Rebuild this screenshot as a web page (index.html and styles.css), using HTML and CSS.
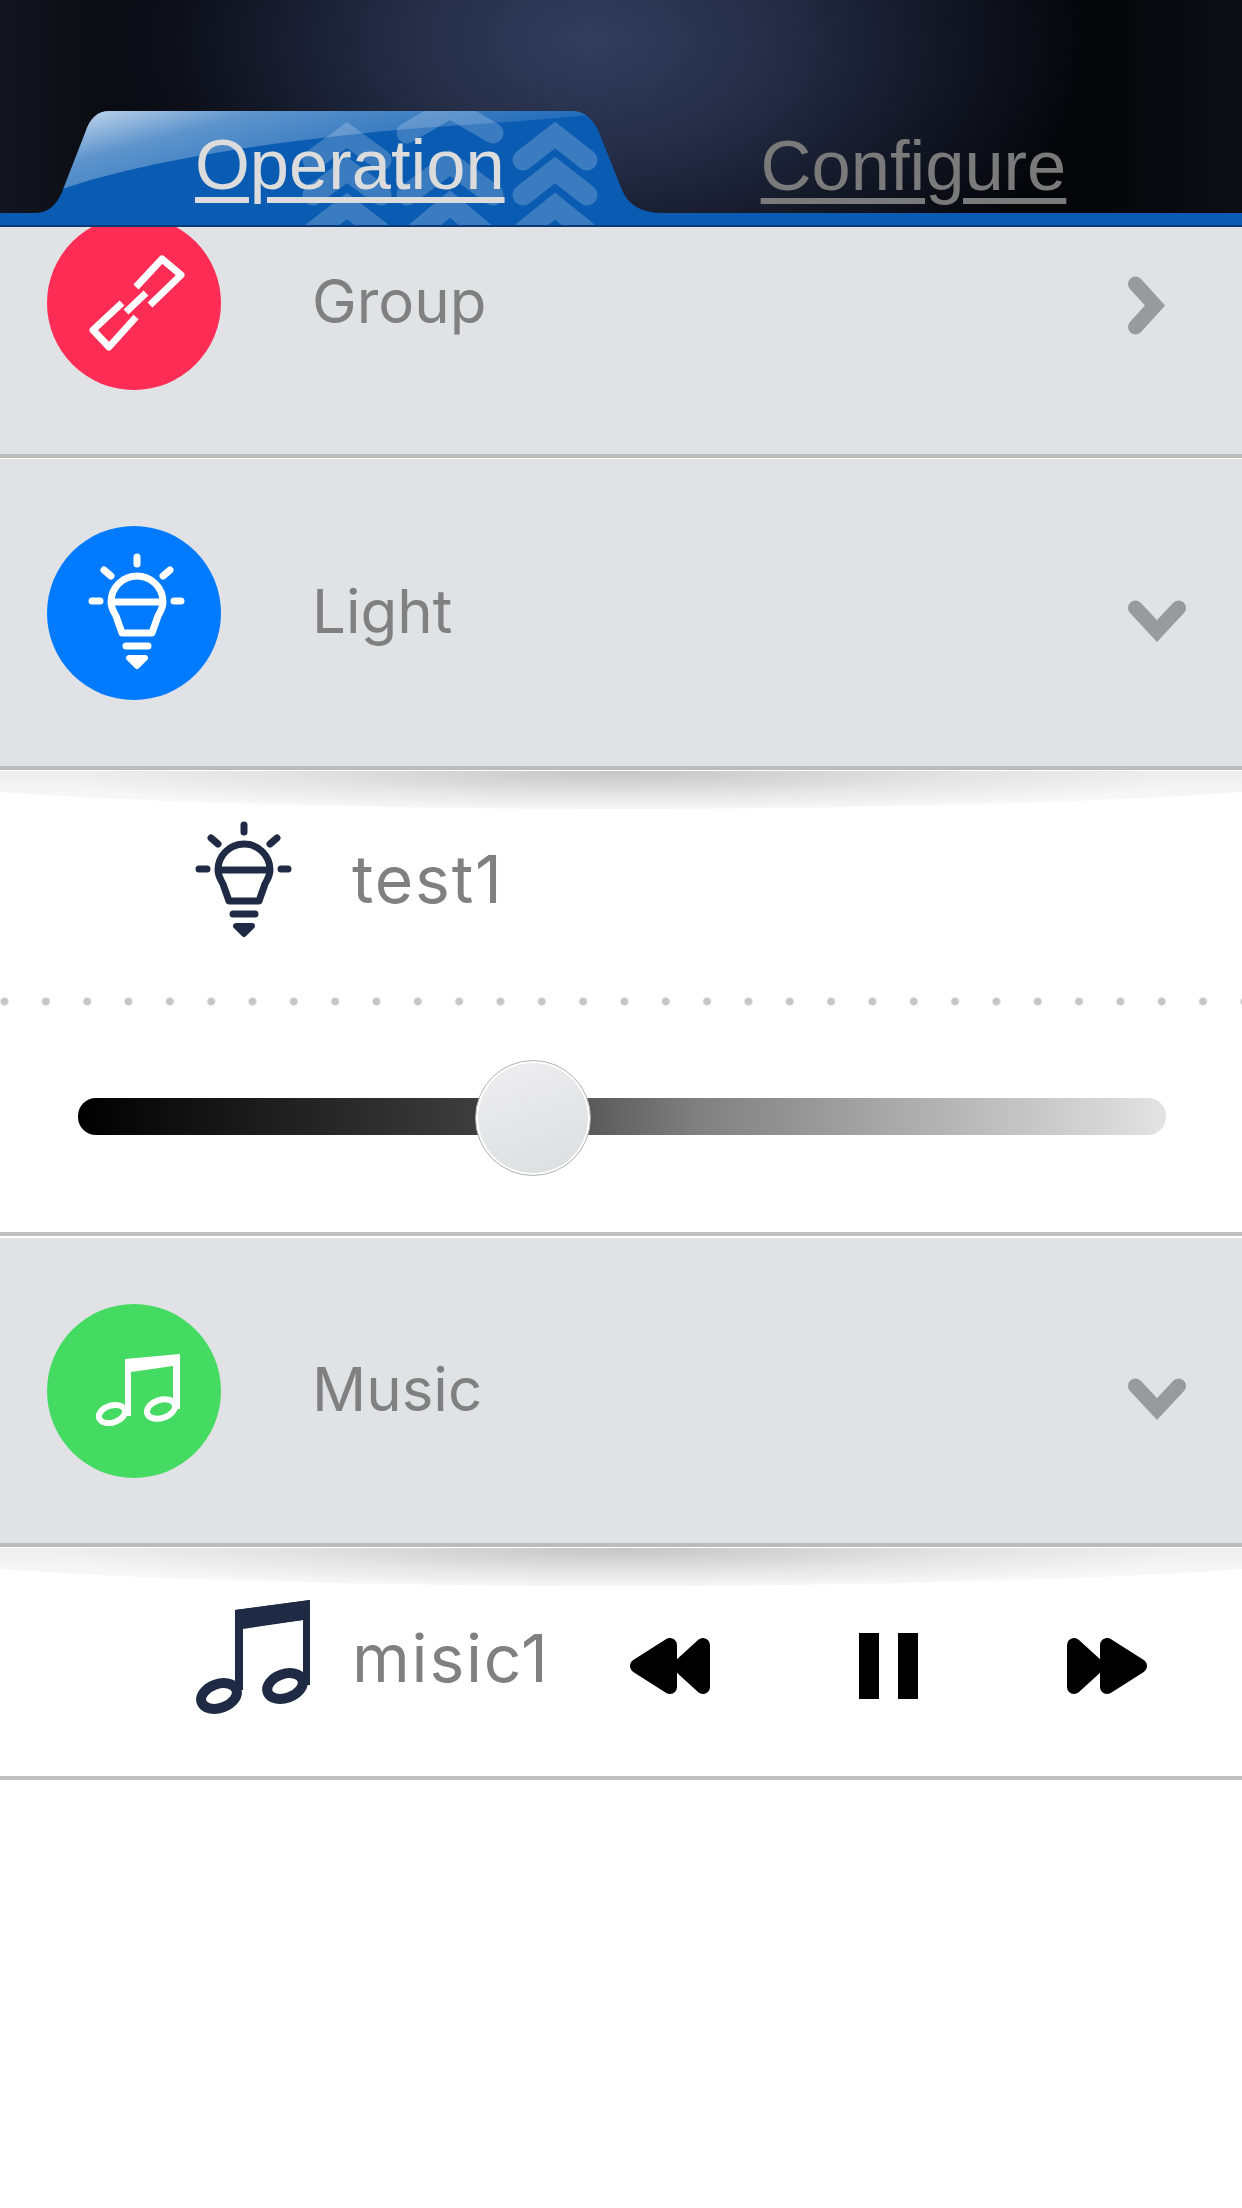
FILE: index.html
```html
<!DOCTYPE html>
<html lang="en">
<head>
<meta charset="utf-8">
<title>Operation</title>
<link rel="stylesheet" href="styles.css">
</head>
<body>
<svg class="defs" width="0" height="0" aria-hidden="true">
  <symbol id="bulb" viewBox="0 0 97 117">
    <g fill="none" stroke="currentColor" stroke-width="7" stroke-linecap="round" stroke-linejoin="round">
      <path d="M49 4V11M16 17L23 23M82 17L75 23M4 48H12M86 48H93"/>
      <path d="M23 49A26 26 0 0 1 75 49C75 55 72 59 70 63L64 80H34L28 63C26 59 23 55 23 49ZM23 49H75"/>
      <path d="M38 93H60"/>
    </g>
    <path d="M41 105H57L49 113Z" fill="currentColor" stroke="currentColor" stroke-width="6" stroke-linejoin="round"/>
  </symbol>
</svg>

<header class="header">
  <svg class="tab-art" viewBox="0 0 1242 227" aria-hidden="true">
    <defs>
      <linearGradient id="gloss" x1="0" y1="0" x2="1" y2=".55">
        <stop offset="0" stop-color="#fff" stop-opacity=".82"/>
        <stop offset=".3" stop-color="#fff" stop-opacity=".34"/>
        <stop offset=".7" stop-color="#fff" stop-opacity=".14"/>
        <stop offset="1" stop-color="#fff" stop-opacity=".03"/>
      </linearGradient>
      <clipPath id="tabclip">
        <path d="M0 226V213H34C48 213 56 206 62 192L85 133C90 118 97 111 110 111H572C584 111 592 118 598 130L622 190C628 205 642 213 662 213H1242V226Z"/>
      </clipPath>
    </defs>
    <path d="M0 226V213H34C48 213 56 206 62 192L85 133C90 118 97 111 110 111H572C584 111 592 118 598 130L622 190C628 205 642 213 662 213H1242V226Z" fill="#0a5cb2"/>
    <g clip-path="url(#tabclip)">
      <g fill="none" stroke="#fff" stroke-opacity=".2" stroke-width="21" stroke-linecap="round" stroke-linejoin="miter">
        <path d="M313 160L347 135L381 160M313 195L347 170L381 195M313 232L347 206L381 232"/>
        <path d="M407 133L450 108L493 133"/>
        <path d="M407 195L450 163L493 195M407 240L450 204L493 240"/>
        <path d="M523 160L555 135L587 160M523 195L555 170L587 195M523 232L555 206L587 232"/>
      </g>
      <path d="M60 190C150 158 300 138 420 128C480 124 540 120 600 114L590 108H80Z" fill="url(#gloss)"/>
    </g>
    <path d="M0 226H1242" stroke="#0a3a78" stroke-width="2"/>
  </svg>
  <nav class="tabs">
    <a class="tab tab-active">Operation</a>
    <a class="tab">Configure</a>
  </nav>
</header>

<main class="list">
  <section class="row row-first">
    <span class="badge badge-red">
      <svg class="badge-link" viewBox="0 0 96 96" aria-hidden="true">
        <path d="M47 32L73 4L92 20L61 50M33 48L4 75L20 92L47 62M37 57L57 38" fill="none" stroke="#fff" stroke-width="7" stroke-linejoin="round"/>
      </svg>
    </span>
    <span class="label">Group</span>
    <svg class="chev chev-right" viewBox="0 0 38 59" aria-hidden="true">
      <path d="M7.5 8L27 29.5L7.5 51" fill="none" stroke="#999a9c" stroke-width="15" stroke-linecap="round"/>
    </svg>
  </section>

  <section class="row">
    <span class="badge badge-blue">
      <svg class="badge-bulb" aria-hidden="true"><use href="#bulb"/></svg>
    </span>
    <span class="label">Light</span>
    <svg class="chev chev-down" viewBox="0 0 58 42" aria-hidden="true">
      <path d="M7.5 8L29 31L50.5 8" fill="none" stroke="#999a9c" stroke-width="15" stroke-linecap="round"/>
    </svg>
  </section>

  <section class="detail detail-light">
    <div class="shade"></div>
    <div class="device device-light">
      <svg class="device-bulb" aria-hidden="true"><use href="#bulb"/></svg>
      <span class="device-name">test1</span>
    </div>
    <div class="dots"></div>
    <div class="slider">
      <div class="track"><div class="knob"></div></div>
    </div>
  </section>

  <section class="row row-music">
    <span class="badge badge-green">
      <svg class="badge-music" viewBox="0 0 85 73" aria-hidden="true">
        <path d="M30 5L85 0V55H78V12L36 18V62H30Z" fill="#fff"/>
        <ellipse cx="17" cy="60" rx="13.5" ry="8.5" transform="rotate(-18 17 60)" fill="none" stroke="#fff" stroke-width="6"/>
        <ellipse cx="66" cy="55" rx="14.5" ry="9" transform="rotate(-18 66 55)" fill="none" stroke="#fff" stroke-width="6"/>
      </svg>
    </span>
    <span class="label">Music</span>
    <svg class="chev chev-down" viewBox="0 0 58 42" aria-hidden="true">
      <path d="M7.5 8L29 31L50.5 8" fill="none" stroke="#999a9c" stroke-width="15" stroke-linecap="round"/>
    </svg>
  </section>

  <section class="detail detail-music">
    <div class="shade"></div>
    <svg class="device-music" viewBox="0 0 115 116" aria-hidden="true">
      <path d="M40 10L115 0V85H108V20L48 29V90H40Z" fill="#1f2a44"/>
      <path d="M40 10L115 0V19L40 29Z" fill="#1f2a44"/>
      <ellipse cx="24" cy="96" rx="18.5" ry="12" transform="rotate(-20 24 96)" fill="none" stroke="#1f2a44" stroke-width="10"/>
      <ellipse cx="90" cy="86" rx="18.5" ry="12" transform="rotate(-20 90 86)" fill="none" stroke="#1f2a44" stroke-width="10"/>
    </svg>
    <span class="device-name">misic1</span>
    <div class="transport">
      <svg class="skip" viewBox="0 0 80 56" aria-hidden="true">
        <path d="M7 28L40 7V49ZM50 28L73 7V49Z" fill="#000" stroke="#000" stroke-width="14" stroke-linejoin="round"/>
      </svg>
      <svg class="pause" viewBox="0 0 59 66" aria-hidden="true">
        <path d="M0 0H20V66H0ZM39 0H59V66H39Z" fill="#000"/>
      </svg>
      <svg class="skip" viewBox="0 0 80 56" aria-hidden="true">
        <path d="M73 28L40 7V49ZM30 28L7 7V49Z" fill="#000" stroke="#000" stroke-width="14" stroke-linejoin="round"/>
      </svg>
    </div>
  </section>
</main>
</body>
</html>
```

FILE: styles.css
```css
* { box-sizing: border-box; }

html, body {
  margin: 0;
  height: 100%;
  background: #fff;
  overflow: hidden;
}

body {
  font-family: Inter, "Liberation Sans", sans-serif;
  width: 1242px;
  height: 2208px;
}

.defs { position: absolute; }

.header {
  position: relative;
  z-index: 2;
  height: 227px;
  background:
    radial-gradient(ellipse 500px 310px at 590px 40px, #323c5c 0%, #262e48 35%, #141928 68%, rgba(6, 7, 11, 0) 100%),
    linear-gradient(90deg, #13161f 0, #05060a 14%, #05060a 88%, #0c0e14 100%);
}

.tab-art {
  position: absolute;
  inset: 0;
  width: 1242px;
  height: 227px;
}

.tabs {
  position: relative;
  display: flex;
  gap: 256px;
  padding: 125px 0 0 195px;
}

.tab {
  font-family: "Liberation Sans", Arial, sans-serif;
  font-size: 70.5px;
  line-height: 80px;
  color: #7a7a7a;
  text-decoration: underline;
  text-decoration-thickness: 6px;
  text-underline-offset: 8px;
}

.tab + .tab { margin-top: 1px; }

.tab-active { color: #dcdcdc; }

.list { display: block; }

.row {
  display: flex;
  align-items: center;
  height: 311px;
  margin-bottom: 1px;
  padding: 0 56px 0 47px;
  background: #e1e2e6;
  border-bottom: 4px solid #bbbcba;
}

.row-first {
  margin-top: -80px;
  padding-top: 4px;
}

.row-music { height: 309px; }

.badge {
  flex: none;
  display: flex;
  align-items: center;
  justify-content: center;
  width: 174px;
  height: 174px;
  border-radius: 50%;
}

.badge-red { background: #ff2d55; }
.badge-blue { background: #007aff; color: #fff; }
.badge-green { background: #45db62; }

.badge-link { width: 96px; height: 96px; margin-left: 6px; }
.badge-bulb { width: 97px; height: 117px; margin: 0 0 2px 4px; }
.badge-music { width: 85px; height: 73px; margin: 0 0 0 6px; }

.label {
  flex: 1;
  margin: 0 0 3px 91px;
  font-size: 60px;
  color: #808080;
}

.chev-right { width: 38px; height: 59px; margin: 6px 20px 0 0; }
.chev-down { width: 58px; height: 42px; margin-top: 16px; }

.detail { position: relative; background: #fff; }

.shade {
  position: absolute;
  top: 0;
  left: 0;
  right: 0;
  height: 38px;
  clip-path: ellipse(60% 100% at 50% 0);
  background:
    radial-gradient(ellipse 46% 115% at 50% 0, rgba(190, 190, 190, .85) 0%, rgba(205, 205, 205, .35) 60%, rgba(255, 255, 255, 0) 100%),
    linear-gradient(180deg, #eeeeee, #fbfbfb);
}

.device {
  display: flex;
  align-items: center;
  padding-left: 195px;
}

.device-light {
  height: 226px;
  padding-bottom: 10px;
  gap: 60px;
  color: #1f2a44;
}

.device-bulb { width: 97px; height: 117px; }

.device-name {
  font-size: 66px;
  letter-spacing: 1.8px;
  color: #808080;
}

.dots {
  height: 9px;
  background: radial-gradient(circle at 4.5px 4.5px, #c6c6c6 3.4px, rgba(198, 198, 198, 0) 4.5px) 0 0 / 41.33px 9px repeat-x;
}

.detail-light { border-bottom: 4px solid #c1c1c1; margin-bottom: 2px; }

.slider {
  display: flex;
  align-items: center;
  height: 226px;
  padding: 0 76px 5px 78px;
}

.track {
  position: relative;
  flex: 1;
  height: 37px;
  border-radius: 18px;
  background: linear-gradient(90deg, #000 0%, #3e3e3e 37%, #5a5a5a 47%, #808080 57%, #e3e3e3 100%);
}

.knob {
  position: absolute;
  left: 397px;
  top: -38px;
  width: 116px;
  height: 116px;
  border-radius: 50%;
  border: 1px solid #b4b4b4;
  box-shadow: inset 0 0 0 2px #fff;
  background: linear-gradient(160deg, #efeff0, #dcdde0);
}

.detail-music {
  display: flex;
  align-items: center;
  height: 232px;
  padding: 0 0 9px 195px;
  border-bottom: 4px solid #c1c1c1;
}

.device-music { width: 115px; height: 116px; flex: none; margin-right: 42px; }

.transport {
  display: flex;
  align-items: center;
  gap: 149px;
  margin: 16px 0 0 80px;
}

.skip { width: 80px; height: 56px; }
.pause { width: 59px; height: 66px; }
```
